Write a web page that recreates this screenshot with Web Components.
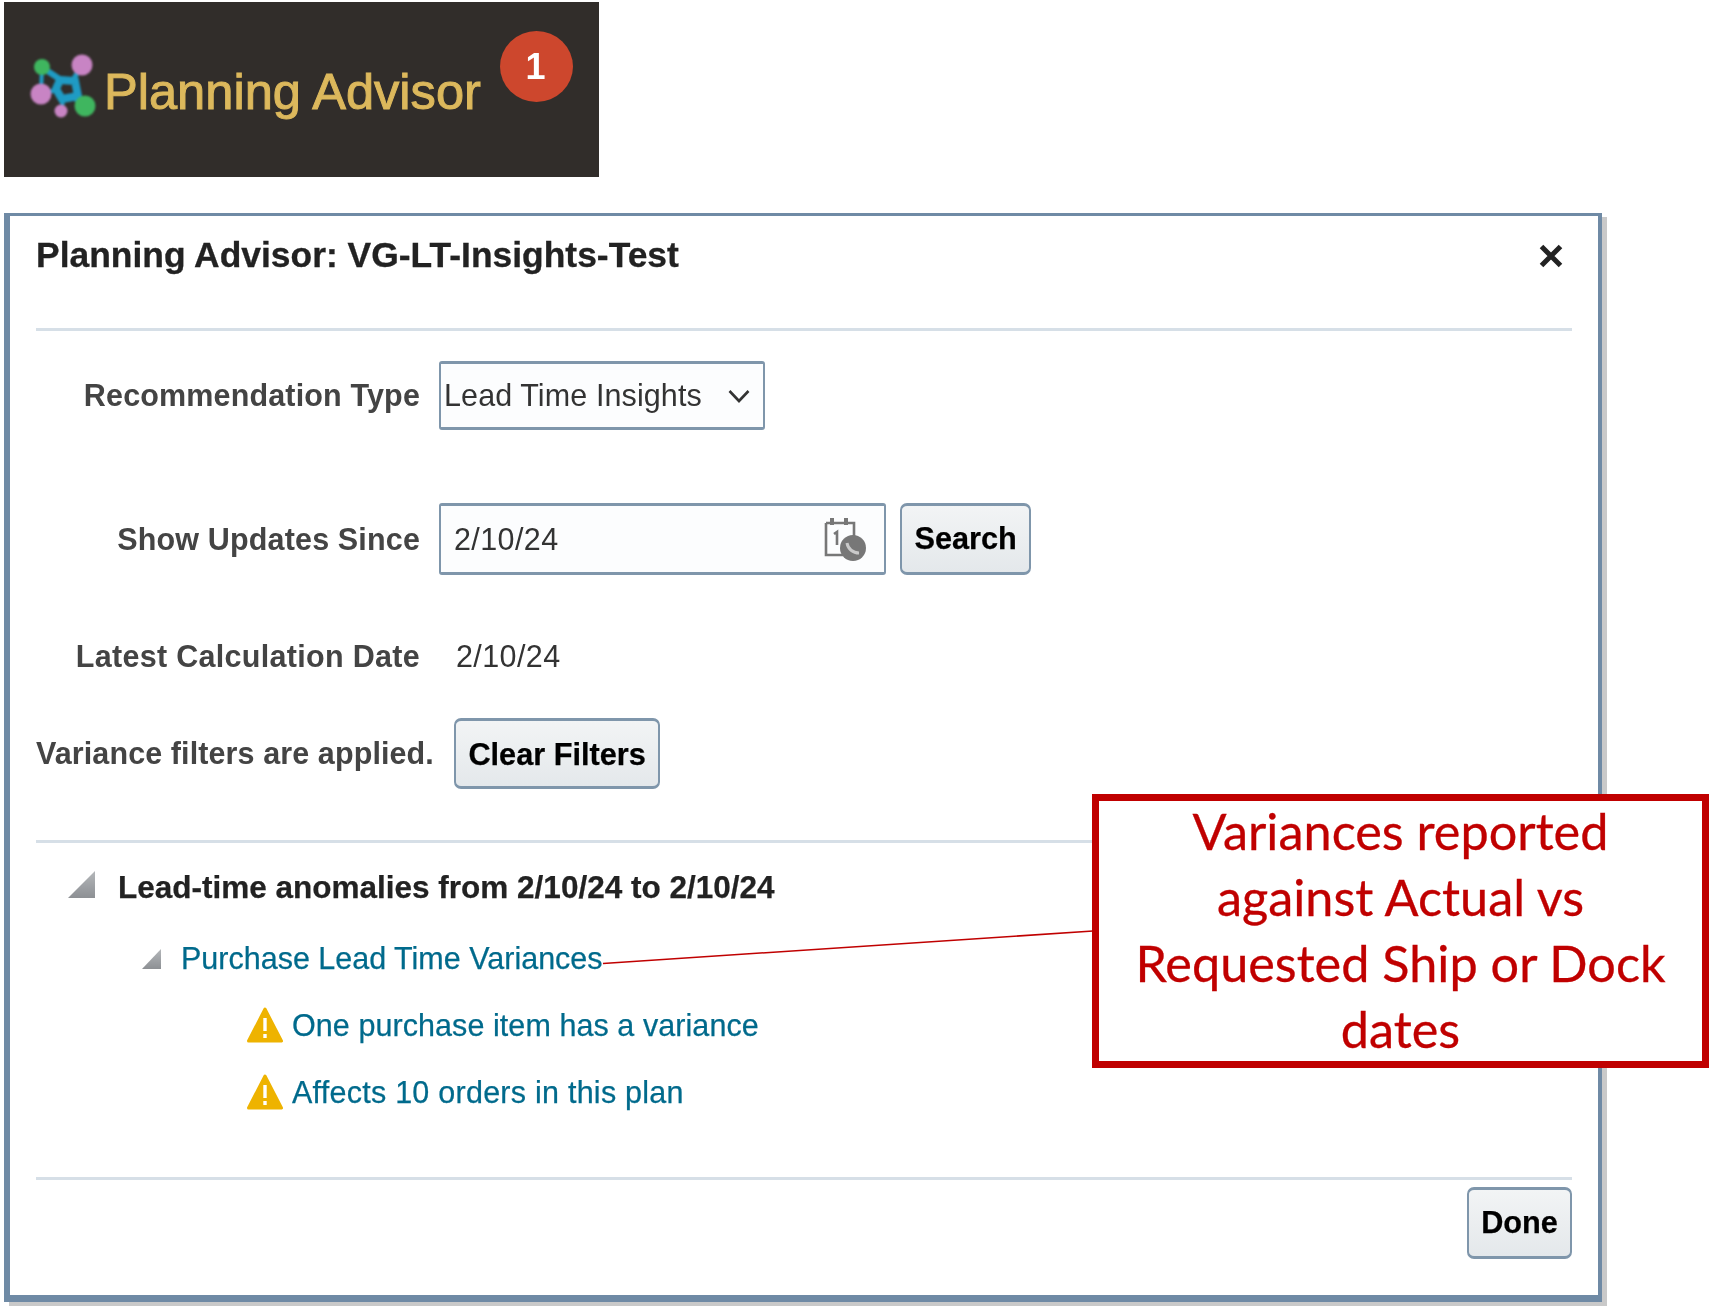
<!DOCTYPE html>
<html lang="en">
<head>
<meta charset="utf-8">
<title>Planning Advisor</title>
<style>
html,body{margin:0;padding:0;background:#fff}
body{width:1714px;height:1306px;overflow:hidden;font-family:"Liberation Sans",Arial,sans-serif}
</style>
</head>
<body>
<pa-page>
  <pa-banner slot="banner" count="1">Planning Advisor</pa-banner>
  <pa-dialog heading="Planning Advisor: VG-LT-Insights-Test">
    <pa-section>
      <pa-row label="Recommendation Type" after="73"><pa-select>Lead Time Insights</pa-select></pa-row>
      <pa-row label="Show Updates Since" after="66"><pa-date value="2/10/24"></pa-date><pa-button tall>Search</pa-button></pa-row>
      <pa-row label="Latest Calculation Date" after="46" spacing=".3" plain><span style="letter-spacing:.4px">2/10/24</span></pa-row>
      <pa-filter-note><span>Variance filters are applied.</span><pa-button style="padding-top:4px">Clear Filters</pa-button></pa-filter-note>
    </pa-section>
    <pa-tree>
      <pa-tree-item level="0" kind="tri-l">Lead-time anomalies from 2/10/24 to 2/10/24</pa-tree-item>
      <pa-tree-item level="1" kind="tri-s" link>Purchase Lead Time Variances</pa-tree-item>
      <pa-tree-item level="2" kind="warn" spacing=".07" link>One purchase item has a variance</pa-tree-item>
      <pa-tree-item level="2" kind="warn" spacing=".25" link>Affects 10 orders in this plan</pa-tree-item>
    </pa-tree>
    <pa-button slot="footer" wide>Done</pa-button>
  </pa-dialog>
  <pa-callout slot="overlay">Variances reported against Actual vs Requested Ship or Dock dates</pa-callout>
</pa-page>
<script>
const def=(name,html,extra)=>{
  const tpl=document.createElement('template');tpl.innerHTML=html;
  customElements.define(name,class extends HTMLElement{
    constructor(){super();this.attachShadow({mode:'open'}).appendChild(tpl.content.cloneNode(true));}
    connectedCallback(){if(extra)extra(this,this.shadowRoot);}
  });
};
const BLUR='filter:blur(.75px);';

def('pa-page',`<style>
:host{display:flex;flex-direction:column;position:relative;width:1714px;height:1306px;box-sizing:border-box;padding:2px 0 0 4px}
.line{position:absolute;left:0;top:0;pointer-events:none}
</style>
<slot name="banner"></slot>
<slot></slot>
<svg class="line" width="1714" height="1306" viewBox="0 0 1714 1306"><path d="M603 963.5L1093 931" stroke="#c00000" stroke-width="1.6" fill="none"/></svg>
<slot name="overlay"></slot>`);

def('pa-banner',`<style>
:host{display:flex;align-items:center;position:relative;width:595px;height:175px;box-sizing:border-box;background:#312d2a;flex:none}
svg{position:absolute;left:-4px;top:-2px}
.t{${BLUR}margin:0 0 0 100px;position:relative;top:3px;font:400 50.6px/1 "Liberation Sans",Arial,sans-serif;color:#dcb85c;-webkit-text-stroke:1px #dcb85c;white-space:nowrap}
.b{${BLUR}position:absolute;left:496px;top:29px;width:73px;height:71px;border-radius:50%;background:#cd472d;color:#fff;display:flex;align-items:center;justify-content:center;font:700 36px/1 "Liberation Sans",Arial,sans-serif;text-indent:-2px}
</style>
<svg width="120" height="140" viewBox="0 0 120 140" style="filter:blur(1px)">
  <g stroke="#1f9bc4" fill="none">
    <path d="M42 67L41 94" stroke-width="4"/>
    <path d="M46 70L61 80" stroke-width="6"/>
    <path d="M82 65L73 80" stroke-width="5"/>
    <path d="M85 106L73 97" stroke-width="5"/>
    <path d="M41 94L57 90" stroke-width="4"/>
    <path d="M61 111L64 97" stroke-width="4"/>
    <path d="M60 80L75 81L78 96L62 99L56 89Z" stroke-width="8"/>
  </g>
  <circle cx="42" cy="67" r="8" fill="#3fb65f"/>
  <circle cx="82" cy="65" r="10.5" fill="#c884c4"/>
  <circle cx="41" cy="94" r="10.5" fill="#c884c4"/>
  <circle cx="61" cy="111" r="6.5" fill="#c884c4"/>
  <circle cx="85" cy="106" r="10.5" fill="#3fb65f"/>
</svg>
<div class="t"><slot></slot></div>
<div class="b" id="b"></div>`,(el,sr)=>{sr.getElementById('b').textContent=el.getAttribute('count')||'';});

def('pa-dialog',`<style>
:host{display:flex;flex-direction:column;flex:none;box-sizing:border-box;width:1598px;height:1089px;margin:36px 0 0 0;background:#fff;
 border:solid #6f8aa5;border-width:3px 4px 7px 6px;box-shadow:5px 4px 0 #c9c9c9;padding:0 26px 0 26px;color:#222;position:relative}
header{${BLUR}display:flex;justify-content:space-between;align-items:center;height:115px;box-sizing:border-box;padding-bottom:32px;border-bottom:3px solid #d6dfe7;flex:none}
h1{margin:0;font:700 35.44px/1 "Liberation Sans",Arial,sans-serif;color:#222;-webkit-text-stroke:.3px #222;white-space:nowrap}
svg{margin-right:8px;margin-top:0}
footer{${BLUR}display:flex;justify-content:flex-end;border-top:3px solid #d6dfe7;padding-top:7px;flex:none;margin-top:auto;height:118px;box-sizing:border-box}
main{display:flex;flex-direction:column;flex:1}
</style>
<header><h1 id="h"></h1><svg width="26" height="26" viewBox="0 0 26 26"><path d="M3.5 3.5L22.500 22.500M22.500 3.500L3.500 22.500" stroke="#222" stroke-width="5"/></svg></header>
<main><slot></slot></main>
<footer><slot name="footer"></slot></footer>`,(el,sr)=>{sr.getElementById('h').textContent=el.getAttribute('heading');});

def('pa-section',`<style>
:host{${BLUR}display:flex;flex-direction:column;box-sizing:border-box;height:512px;padding-top:30px;border-bottom:3px solid #d6dfe7;font:400 30.5px/1 "Liberation Sans",Arial,sans-serif;letter-spacing:.1px;color:#333}
</style><slot></slot>`);

def('pa-row',`<style>
:host{display:flex;align-items:center;flex:none;position:relative}
label{width:384px;flex:none;text-align:right;font-weight:700;color:#444;white-space:nowrap;letter-spacing:.15px}
.c{display:flex;align-items:center;gap:14px;margin-left:19px}
:host([plain]) .c{margin-left:36px;color:#333}
</style><label id="l"></label><div class="c"><slot></slot></div>`,(el,sr)=>{
  const l=sr.getElementById('l');
  l.textContent=el.getAttribute('label');
  if(el.hasAttribute('spacing'))l.style.letterSpacing=el.getAttribute('spacing')+'px';
  el.style.marginBottom=el.getAttribute('after')+'px';
});

def('pa-select',`<style>
:host{display:flex;align-items:center;box-sizing:border-box;width:326px;height:69px;border:2px solid #7f96ab;border-bottom-width:3px;border-top-width:3px;border-radius:3px;background:#fcfdfe;padding-left:3px;color:#333;white-space:nowrap}
svg{margin-left:25px;flex:none}
</style><slot></slot><svg width="24" height="16" viewBox="0 0 24 16"><path d="M2.500 3L12 13L21.500 3" fill="none" stroke="#333" stroke-width="2.6"/></svg>`);

def('pa-date',`<style>
:host{display:flex;align-items:center;justify-content:space-between;box-sizing:border-box;width:447px;height:72px;border:2px solid #7f96ab;border-bottom-width:3px;border-top-width:3px;border-radius:3px;background:#fcfdfe;padding:0 15px 0 13px;color:#333}
span{letter-spacing:.4px}
svg{margin-top:2px}
</style><span id="v"></span><svg width="46" height="46" viewBox="0 0 46 46">
<path d="M3 6H31V33M3 6V38H20" fill="none" stroke="#777" stroke-width="2.600"/>
<path d="M9 1V8M23 1V8" stroke="#777" stroke-width="4"/>
<path d="M11 17L14 15V28" fill="none" stroke="#777" stroke-width="2.600"/>
<circle cx="30" cy="31" r="13" fill="#777"/>
<path d="M24 26C25 32 30 36 36 36" fill="none" stroke="#c9c9c9" stroke-width="3"/>
</svg>`,(el,sr)=>{sr.getElementById('v').textContent=el.getAttribute('value');});

def('pa-button',`<style>
:host{display:inline-flex;align-items:center;justify-content:center;box-sizing:border-box;height:71px;padding:0 12.5px;border:2px solid #7f96ab;border-top-width:3px;border-bottom-width:3px;border-radius:7px;background:linear-gradient(#f2f4f5,#e4e8eb);font:700 30.7px/1 "Liberation Sans",Arial,sans-serif;letter-spacing:0;color:#000;-webkit-text-stroke:.25px #000;white-space:nowrap;flex:none}
:host([wide]){width:105px;padding:0;height:72px}
:host([tall]){height:72px}
</style><slot></slot>`);

def('pa-filter-note',`<style>
:host{display:flex;align-items:center;font-weight:700;color:#444;white-space:nowrap}
::slotted(pa-button){margin-left:20px}
</style><slot></slot>`);

def('pa-tree',`<style>
:host{${BLUR}display:flex;flex-direction:column;padding-top:7px;font:400 30.5px/1 "Liberation Sans",Arial,sans-serif}
</style><slot></slot>`);

const ICONS={
 'tri-l':`<svg width="28" height="30" viewBox="0 0 28 30"><defs><linearGradient id="g" x1="0" x2="0" y1="0" y2="1"><stop offset="0" stop-color="#b4b7ba"/><stop offset="1" stop-color="#8d9094"/></linearGradient></defs><path d="M0 28L27 1V28Z" fill="url(#g)"/></svg>`,
 'tri-s':`<svg width="20" height="22" viewBox="0 0 20 22"><defs><linearGradient id="g" x1="0" x2="0" y1="0" y2="1"><stop offset="0" stop-color="#b4b7ba"/><stop offset="1" stop-color="#8d9094"/></linearGradient></defs><path d="M0 21L19 1V21Z" fill="url(#g)"/></svg>`,
 'warn':`<svg width="36" height="37" viewBox="0 0 36 37"><path d="M18 2L34.500 34H1.500Z" fill="#eeb300" stroke="#eeb300" stroke-width="3" stroke-linejoin="round"/><path d="M18 11V24" stroke="#fff" stroke-width="3.400"/><path d="M18 27V31" stroke="#fff" stroke-width="3.400"/></svg>`
};
const LAYOUT={0:{pl:32,gap:22,h:75,fw:700,fs:31.5,c:'#222',mb:6},1:{pl:106,gap:19,h:67,fw:400,fs:30.5,c:'#006a8c',mb:0},2:{pl:211,gap:9,h:67,fw:400,fs:30.5,c:'#006a8c',mb:0}};
def('pa-tree-item',`<style>
:host{display:flex;align-items:center;white-space:nowrap}
.i{display:flex;flex:none}
</style><span class="i" id="i"></span><slot></slot>`,(el,sr)=>{
  const l=LAYOUT[el.getAttribute('level')];
  const i=sr.getElementById('i');i.innerHTML=ICONS[el.getAttribute('kind')];
  el.style.cssText=`height:${l.h}px;padding-left:${l.pl}px;font-weight:${l.fw};font-size:${l.fs}px;color:${l.c};-webkit-text-stroke:.25px ${l.c};letter-spacing:${el.getAttribute('spacing')||0}px`;
  i.style.marginRight=l.gap+'px';
  i.style.marginBottom=l.mb+'px';
});

def('pa-callout',`<style>
:host{position:absolute;left:1092px;top:794px;width:617px;height:274px;box-sizing:border-box;border:7px solid #c00000;background:#fff;color:#c00000;display:block;text-align:center;font:400 50.4px/66px Lato,"Open Sans",sans-serif;-webkit-text-stroke:.3px #c00000;padding:0 30px}
div{margin-top:-3px}
</style><div><slot></slot></div>`);
</script>
</body>
</html>
